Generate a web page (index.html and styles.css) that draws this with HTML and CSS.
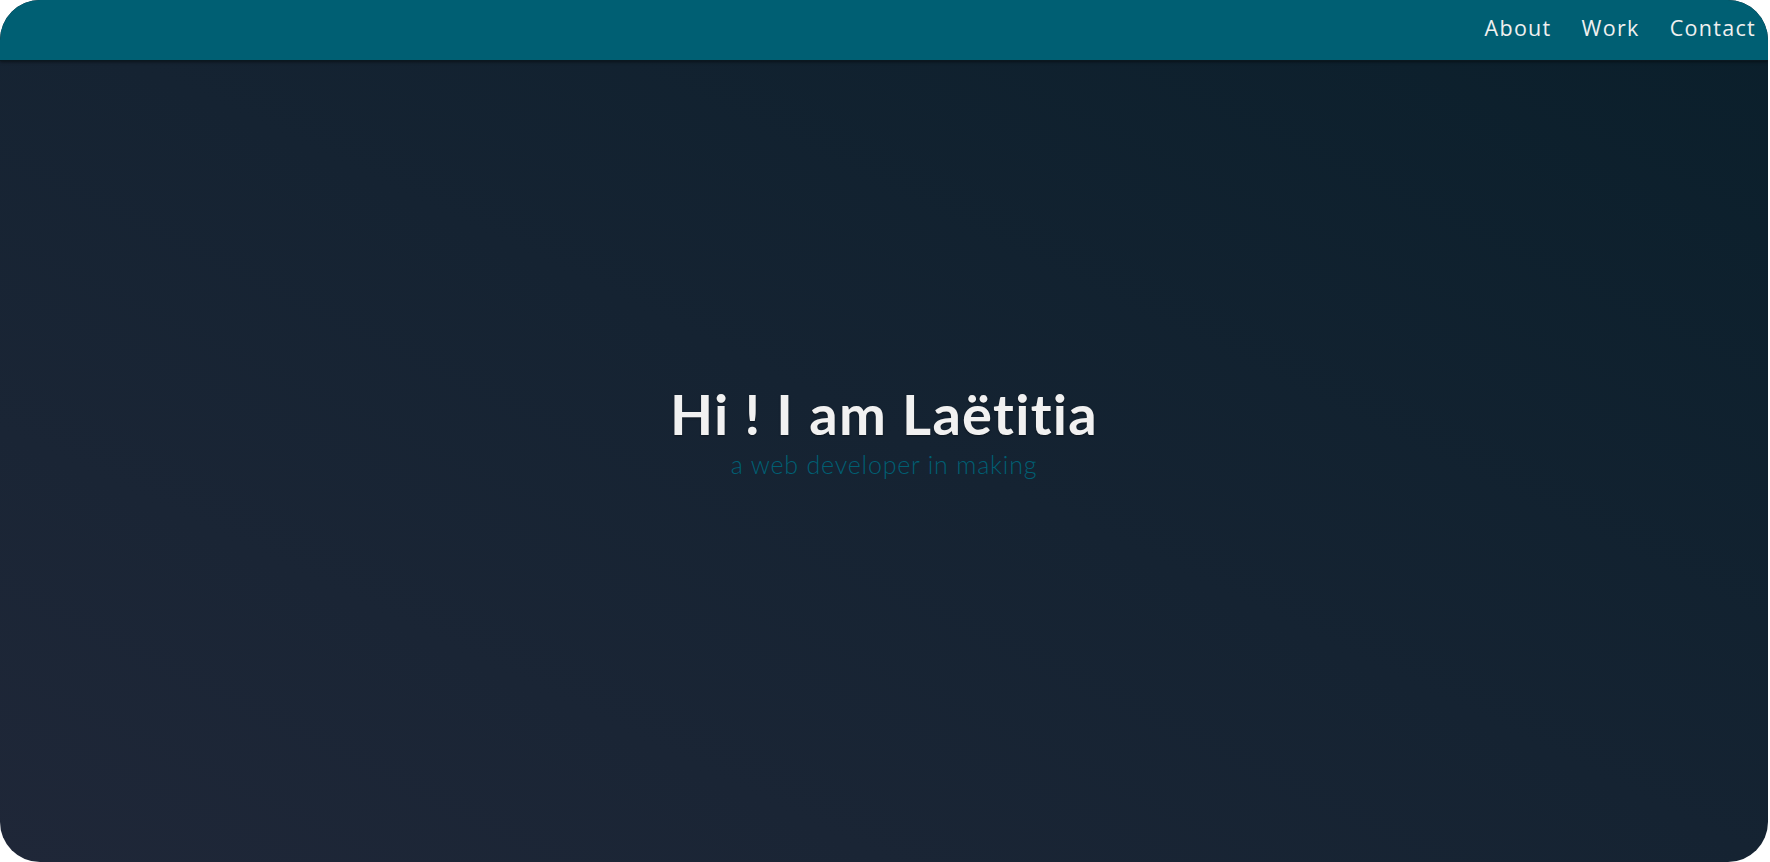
FILE: index.html
```html
<!DOCTYPE html>
<html lang="en">
<head>
<meta charset="utf-8">
<title>Laëtitia</title>
<link rel="stylesheet" href="styles.css">
</head>
<body>
<div class="page">
  <header class="topbar">
    <nav class="nav">
      <a href="#about" class="nav-link">About</a>
      <a href="#work" class="nav-link">Work</a>
      <a href="#contact" class="nav-link">Contact</a>
    </nav>
  </header>
  <main class="hero">
    <h1 class="hero-title">Hi ! I am Laëtitia</h1>
    <p class="hero-sub">a web developer in making</p>
  </main>
</div>
</body>
</html>
```
FILE: styles.css
```css
* { box-sizing: border-box; }
html, body { margin: 0; padding: 0; height: 100%; background: #ffffff; }
.page {
  width: 1768px;
  height: 862px;
  border-radius: 40px;
  overflow: hidden;
  display: flex;
  flex-direction: column;
  background: linear-gradient(to top right, #1f2738 0%, #152332 50%, #0a1f2b 100%);
}
.topbar {
  height: 61px;
  flex: 0 0 61px;
  background: #005f73;
  border-bottom: 1px solid #0b1820;
  box-shadow: 0 1px 3px rgba(0,0,0,0.5);
  display: flex;
  justify-content: flex-end;
  align-items: center;
  padding-right: 12px;
}
.nav { display: flex; gap: 30px; align-items: center; }
.nav-link {
  font-family: "Open Sans", sans-serif;
  font-weight: 500;
  font-size: 21.5px;
  letter-spacing: 1.3px;
  color: #f0f0f0;
  text-decoration: none;
  line-height: 1;
  padding-bottom: 4px;
}
.hero {
  flex: 1;
  display: flex;
  flex-direction: column;
  align-items: center;
  justify-content: center;
  padding-bottom: 64px;
}
.hero-title {
  margin: 0;
  font-family: "Lato", sans-serif;
  font-weight: 700;
  font-size: 56px;
  line-height: 66px;
  letter-spacing: 1.3px;
  font-variant-ligatures: none;
  color: #f1f1f1;
  text-shadow: 0 1px 2px rgba(0,0,0,0.4);
}
.hero-sub {
  margin: 2px 0 0;
  font-family: "Lato", sans-serif;
  font-weight: 300;
  font-size: 25px;
  line-height: 30px;
  letter-spacing: 0.8px;
  color: #005f73;
}
```
